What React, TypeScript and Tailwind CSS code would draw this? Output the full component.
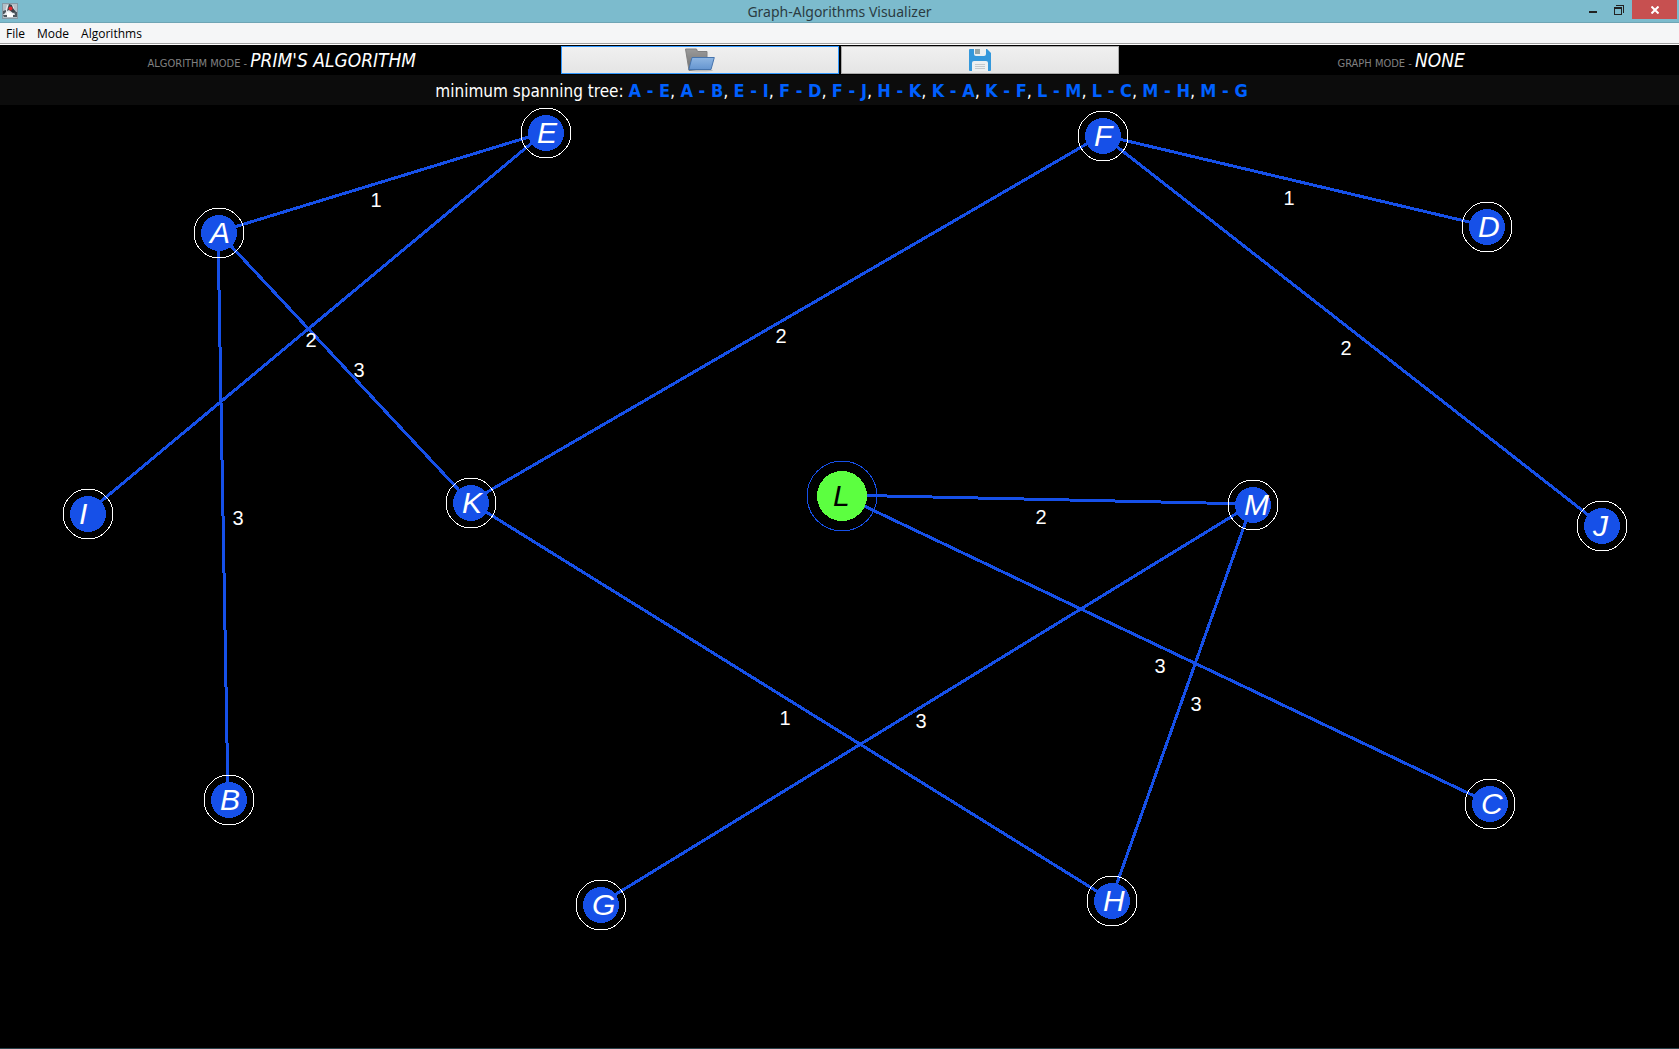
const EDGE_BLUE = "#1650e8";

type GraphNode = { id: string; x: number; y: number; start?: boolean };
type GraphEdge = { from: string; to: string; weight: number; labelX: number; labelY: number };

const nodes: GraphNode[] = [
  { id: "A", x: 219, y: 128 },
  { id: "B", x: 229, y: 695 },
  { id: "C", x: 1490, y: 699 },
  { id: "D", x: 1487, y: 122 },
  { id: "E", x: 546, y: 28 },
  { id: "F", x: 1103, y: 31 },
  { id: "G", x: 601, y: 800 },
  { id: "H", x: 1112, y: 796 },
  { id: "I", x: 88, y: 409 },
  { id: "J", x: 1602, y: 421 },
  { id: "K", x: 471, y: 398 },
  { id: "L", x: 842, y: 391, start: true },
  { id: "M", x: 1253, y: 400 },
];

const edges: GraphEdge[] = [
  { from: "A", to: "E", weight: 1, labelX: 376, labelY: 102 },
  { from: "A", to: "B", weight: 3, labelX: 238, labelY: 420 },
  { from: "E", to: "I", weight: 2, labelX: 311, labelY: 242 },
  { from: "F", to: "D", weight: 1, labelX: 1289, labelY: 100 },
  { from: "F", to: "J", weight: 2, labelX: 1346, labelY: 250 },
  { from: "H", to: "K", weight: 1, labelX: 785, labelY: 620 },
  { from: "K", to: "A", weight: 3, labelX: 359, labelY: 272 },
  { from: "K", to: "F", weight: 2, labelX: 781, labelY: 238 },
  { from: "L", to: "M", weight: 2, labelX: 1041, labelY: 419 },
  { from: "L", to: "C", weight: 3, labelX: 1160, labelY: 568 },
  { from: "M", to: "H", weight: 3, labelX: 1196, labelY: 606 },
  { from: "M", to: "G", weight: 3, labelX: 921, labelY: 623 },
];

const nodeById = (id: string) => nodes.find((n) => n.id === id)!;

function DukeIcon() {
  return (
    <svg width="16" height="16" viewBox="0 0 16 16" aria-hidden="true">
      <rect width="16" height="16" fill="#b4bfc6" />
      <path d="M0 0h16v1H0zM0 15h16v1H0zM0 0h1v16H0zM15 0h1v16h-1z" fill="#8599a4" />
      <path d="M5 2l6 0 2 6 2 4-2 2H4l-2-2 1-3z" fill="#e6e9ec" />
      <path d="M7 1l3 1 1 3 3 4-3 1-4-3-2 1 1-4z" fill="#3a434a" />
      <circle cx="8.5" cy="5.500" r="2" fill="#e3262b" />
      <path d="M1 8l3-1v2l-2 2H1zM12 9h3v3h-2zM1 12h4v2H2zM11 12h4v2h-4z" fill="#4d575e" />
      <path d="M5 9l4 1 2 1v3H5z" fill="#fff" />
    </svg>
  );
}

function FolderIcon() {
  return (
    <svg width="30" height="24" viewBox="0 0 30 24" aria-hidden="true">
      <defs>
        <linearGradient id="folderBack" x1="0" y1="0" x2="0" y2="1">
          <stop offset="0" stopColor="#9a9a9a" />
          <stop offset="1" stopColor="#6f6f6f" />
        </linearGradient>
        <linearGradient id="folderFront" x1="0" y1="0" x2="0" y2="1">
          <stop offset="0" stopColor="#8fb6e2" />
          <stop offset="1" stopColor="#6595d0" />
        </linearGradient>
      </defs>
      <ellipse cx="16" cy="22.500" rx="12" ry="1" fill="#bdbdbd" />
      <path d="M.5 1h11l1 2.500h9.500V20L4 22.500z" fill="url(#folderBack)" stroke="#808080" />
      <path d="M7 9.500h22.300L26 21.500H3.800z" fill="url(#folderFront)" stroke="#4674ad" />
    </svg>
  );
}

function SaveIcon() {
  return (
    <svg width="24" height="24" viewBox="0 0 24 24" aria-hidden="true">
      <path d="M2 1h17l4 4v17a1 1 0 0 1-1 1H2a1 1 0 0 1-1-1V2a1 1 0 0 1 1-1z" fill="#3498db" />
      <path d="M6 0h12v6a2 2 0 0 1-2 2H8a2 2 0 0 1-2-2z" fill="#ecf0f1" />
      <rect x="7" y="1" width="5" height="5" fill="#95a5a6" />
      <path d="M4 23v-8a2 2 0 0 1 2-2h12a2 2 0 0 1 2 2v8z" fill="#ecf0f1" />
      <path d="M7 16.500h10M7 18.500h10M7 20.500h10" stroke="#c3c9cc" />
    </svg>
  );
}

function TitleBar() {
  return (
    <header className="grid h-[23px] grid-cols-[1fr_auto_1fr] border-b border-[#6fa5b5] bg-[#7cbbcd] font-['Noto_Sans',sans-serif]">
      <div className="pl-0.5 pt-[3px]">
        <DukeIcon />
      </div>
      <h1 className="text-[14px] leading-[23px] text-[#2b3b42]">Graph-Algorithms Visualizer</h1>
      <div className="flex items-start justify-end pr-0.5">
        <button aria-label="Minimize" className="flex h-[19px] w-[26px] items-center justify-center">
          <svg width="8" height="13" viewBox="0 0 8 13">
            <path d="M0 8h8v2H0z" fill="#222" />
          </svg>
        </button>
        <button aria-label="Restore" className="flex h-[19px] w-[26px] items-center justify-center">
          <svg width="10" height="10" viewBox="0 0 10 10" fill="none" stroke="#222" shapeRendering="crispEdges">
            <path d="M2 .5h7.500V8M.5 2.500h7v7h-7zM.5 3.500h7" />
          </svg>
        </button>
        <button aria-label="Close" className="flex h-[19px] w-[45px] items-center justify-center bg-[#c75050]">
          <svg width="8" height="8" viewBox="0 0 8 8" stroke="#fff" strokeWidth="2">
            <path d="M.5.5l7 7M7.500.5l-7 7" />
          </svg>
        </button>
      </div>
    </header>
  );
}

function MenuBar() {
  return (
    <div className="border-b border-white">
      <nav className="flex h-[21px] items-center gap-3 border-b border-[#a0a0a0] bg-[#f5f6f7] pl-1.5 pt-0.5 font-['Open_Sans',sans-serif] text-[12px] leading-5 text-black">
        <button>File</button>
        <button>Mode</button>
        <button>Algorithms</button>
      </nav>
    </div>
  );
}

function ModeLabel({ label, value }: { label: string; value: string }) {
  return (
    <p className="pl-1 text-center font-['DejaVu_Sans_Condensed','DejaVu_Sans',sans-serif] leading-[30px] whitespace-nowrap">
      <span className="text-[11px] text-[#808080]">{label} - </span>
      <span className="text-[19px] text-white italic">{value}</span>
    </p>
  );
}

function Toolbar() {
  return (
    <div className="grid grid-cols-3 grid-rows-[30px] bg-black">
      <ModeLabel label="ALGORITHM MODE" value="PRIM'S ALGORITHM" />
      <div className="grid grid-cols-2 grid-rows-[28px] gap-0.5 py-px pl-px">
        <button
          aria-label="Open graph"
          className="flex items-center justify-center border border-[#3399ff] bg-linear-to-b from-[#f0f0f0] to-[#e5e5e5]"
        >
          <FolderIcon />
        </button>
        <button
          aria-label="Save graph"
          className="flex items-center justify-center border border-[#acacac] bg-linear-to-b from-[#f0f0f0] to-[#e5e5e5]"
        >
          <SaveIcon />
        </button>
      </div>
      <ModeLabel label="GRAPH MODE" value="NONE" />
    </div>
  );
}

function ResultBar() {
  return (
    <p className="h-[30px] bg-[#0c0c0c] pl-1 text-center font-['DejaVu_Sans_Condensed','DejaVu_Sans',sans-serif] text-[18px] leading-[32px] whitespace-nowrap text-white">
      <span className="text-[17px]">minimum spanning tree: </span>
      {edges.map((e, i) => (
        <span key={e.from + e.to}>
          {i > 0 && ", "}
          <b className="font-bold text-[#0060ff]">
            {e.from} - {e.to}
          </b>
        </span>
      ))}
    </p>
  );
}

function GraphCanvas() {
  return (
    <svg
      viewBox="0 0 1679 943"
      className="block h-auto w-full bg-black font-['Liberation_Sans',Arial,sans-serif]"
      role="img"
      aria-label="Minimum spanning tree graph"
    >
      <g stroke={EDGE_BLUE} strokeWidth="3" shapeRendering="crispEdges">
        {edges.map((e) => {
          const a = nodeById(e.from);
          const b = nodeById(e.to);
          return <line key={e.from + e.to} x1={a.x - 1} y1={a.y - 1} x2={b.x - 1} y2={b.y - 1} />;
        })}
      </g>
      <g shapeRendering="crispEdges">
        {nodes.map((n) => (
          <g key={n.id}>
            <circle cx={n.x} cy={n.y} r={n.start ? 35 : 25} fill="none" stroke={n.start ? EDGE_BLUE : "#fff"} />
            <circle cx={n.x} cy={n.y} r={n.start ? 25 : 18} fill={n.start ? "#5cff40" : EDGE_BLUE} />
            <text x={n.x - 9} y={n.y + 10} className={n.start ? "fill-black text-[30px] italic" : "fill-white text-[30px] italic"}>
              {n.id}
            </text>
          </g>
        ))}
      </g>
      <g className="fill-white text-[20px]" textAnchor="middle">
        {edges.map((e) => (
          <text key={e.from + e.to} x={e.labelX} y={e.labelY}>
            {e.weight}
          </text>
        ))}
      </g>
    </svg>
  );
}

export default function App() {
  return (
    <div className="flex min-h-screen flex-col bg-black">
      <TitleBar />
      <MenuBar />
      <main className="flex-1">
        <Toolbar />
        <ResultBar />
        <GraphCanvas />
      </main>
      <footer className="h-px bg-[#2c444c]" />
    </div>
  );
}
